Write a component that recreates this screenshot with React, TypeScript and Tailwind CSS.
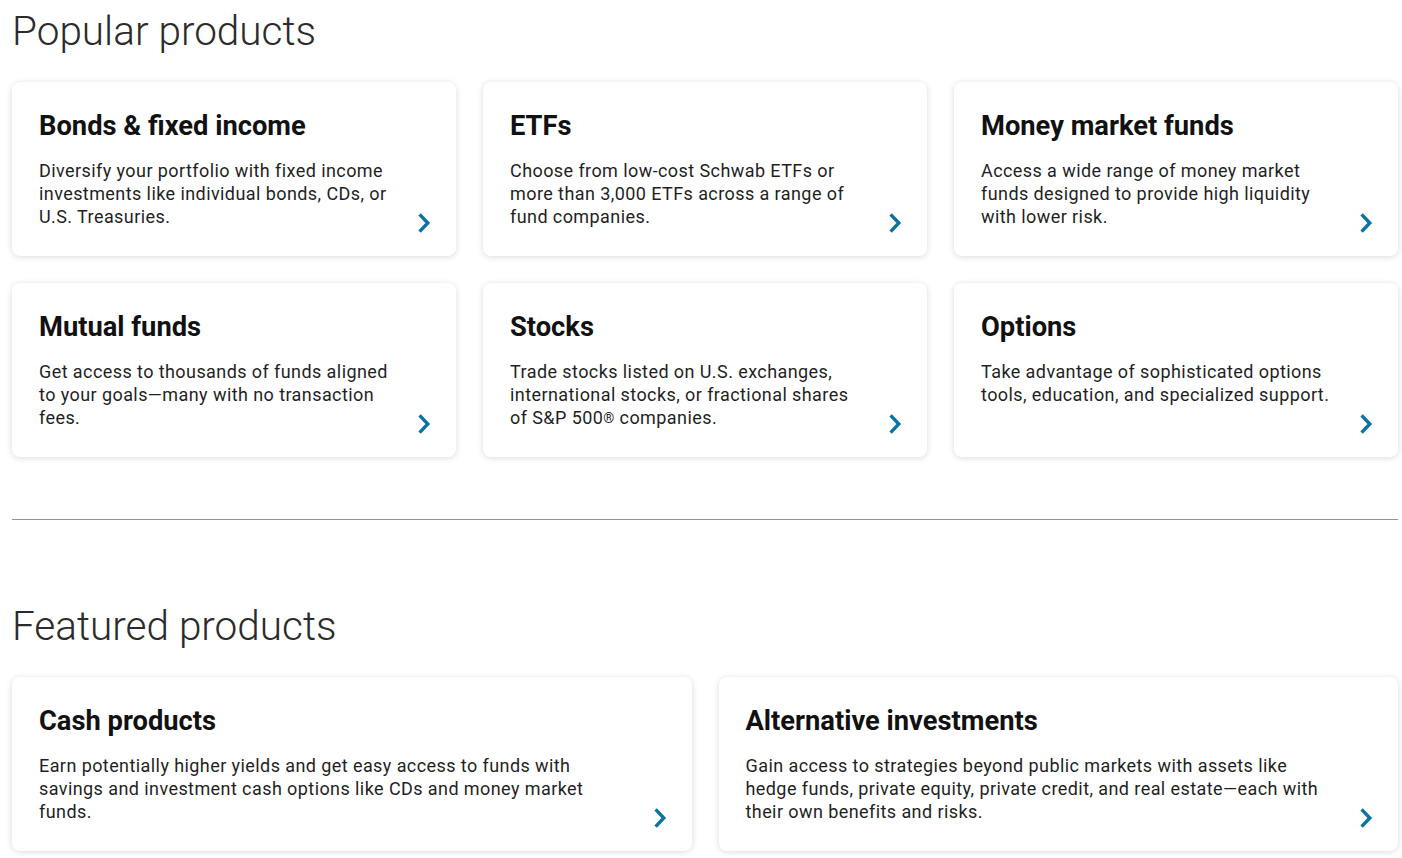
import React from 'react';

type Product = {
  title: string;
  lines: React.ReactNode[];
};

const popular: Product[] = [
  {
    title: 'Bonds & fixed income',
    lines: ['Diversify your portfolio with fixed income', 'investments like individual bonds, CDs, or', 'U.S. Treasuries.'],
  },
  {
    title: 'ETFs',
    lines: ['Choose from low-cost Schwab ETFs or', 'more than 3,000 ETFs across a range of', 'fund companies.'],
  },
  {
    title: 'Money market funds',
    lines: ['Access a wide range of money market', 'funds designed to provide high liquidity', 'with lower risk.'],
  },
  {
    title: 'Mutual funds',
    lines: ['Get access to thousands of funds aligned', 'to your goals\u2014many with no transaction', 'fees.'],
  },
  {
    title: 'Stocks',
    lines: [
      'Trade stocks listed on U.S. exchanges,',
      'international stocks, or fractional shares',
      <>
        of S&amp;P 500<sup className="relative -top-[1px] text-[14px] leading-none">®</sup> companies.
      </>,
    ],
  },
  {
    title: 'Options',
    lines: ['Take advantage of sophisticated options', 'tools, education, and specialized support.'],
  },
];

const featured: Product[] = [
  {
    title: 'Cash products',
    lines: [
      'Earn potentially higher yields and get easy access to funds with',
      'savings and investment cash options like CDs and money market',
      'funds.',
    ],
  },
  {
    title: 'Alternative investments',
    lines: [
      'Gain access to strategies beyond public markets with assets like',
      'hedge funds, private equity, private credit, and real estate\u2014each with',
      'their own benefits and risks.',
    ],
  },
];

function Chevron() {
  return (
    <svg width="14" height="22" viewBox="0 0 14 22" className="shrink-0 self-end">
      <path d="M2.6 2.4 L10.8 11 L2.6 19.6" fill="none" stroke="#0b73a1" strokeWidth="3.4" />
    </svg>
  );
}

function ProductCard({ item }: { item: Product }) {
  return (
    <a
      href="#"
      className="flex gap-5 rounded-lg bg-white pl-[27px] pr-[25px] pt-[28px] pb-[22px] shadow-[0_1px_6px_rgba(0,0,0,0.15)]"
    >
      <div className="flex-1 pb-[6px]">
        <h3 className="text-[27.3px] leading-[32px] font-bold text-[#111]">{item.title}</h3>
        <p className="mt-[17px] text-[18px] leading-[23px] tracking-[0.42px] text-[#1f1f1f]">
          {item.lines.map((line, i) => (
            <span key={i} className="block whitespace-nowrap">
              {line}
            </span>
          ))}
        </p>
      </div>
      <Chevron />
    </a>
  );
}

export default function App() {
  return (
    <div className="min-h-screen bg-white pl-3 pr-1 pt-[6px] font-['Roboto','Liberation_Sans',sans-serif]">
      <h2 className="text-[40.5px] leading-[50px] font-light text-[#2b2b2b]">Popular products</h2>
      <div className="mt-[26px] grid grid-cols-3 gap-[27px]">
        {popular.map(p => (
          <ProductCard key={p.title} item={p} />
        ))}
      </div>

      <hr className="mt-[62px] border-0 border-t border-[#8c96a1]" />

      <h2 className="mt-[81px] text-[40.5px] leading-[50px] font-light text-[#2b2b2b]">Featured products</h2>
      <div className="mt-[26px] grid grid-cols-2 gap-[27px]">
        {featured.map(p => (
          <ProductCard key={p.title} item={p} />
        ))}
      </div>
    </div>
  );
}
